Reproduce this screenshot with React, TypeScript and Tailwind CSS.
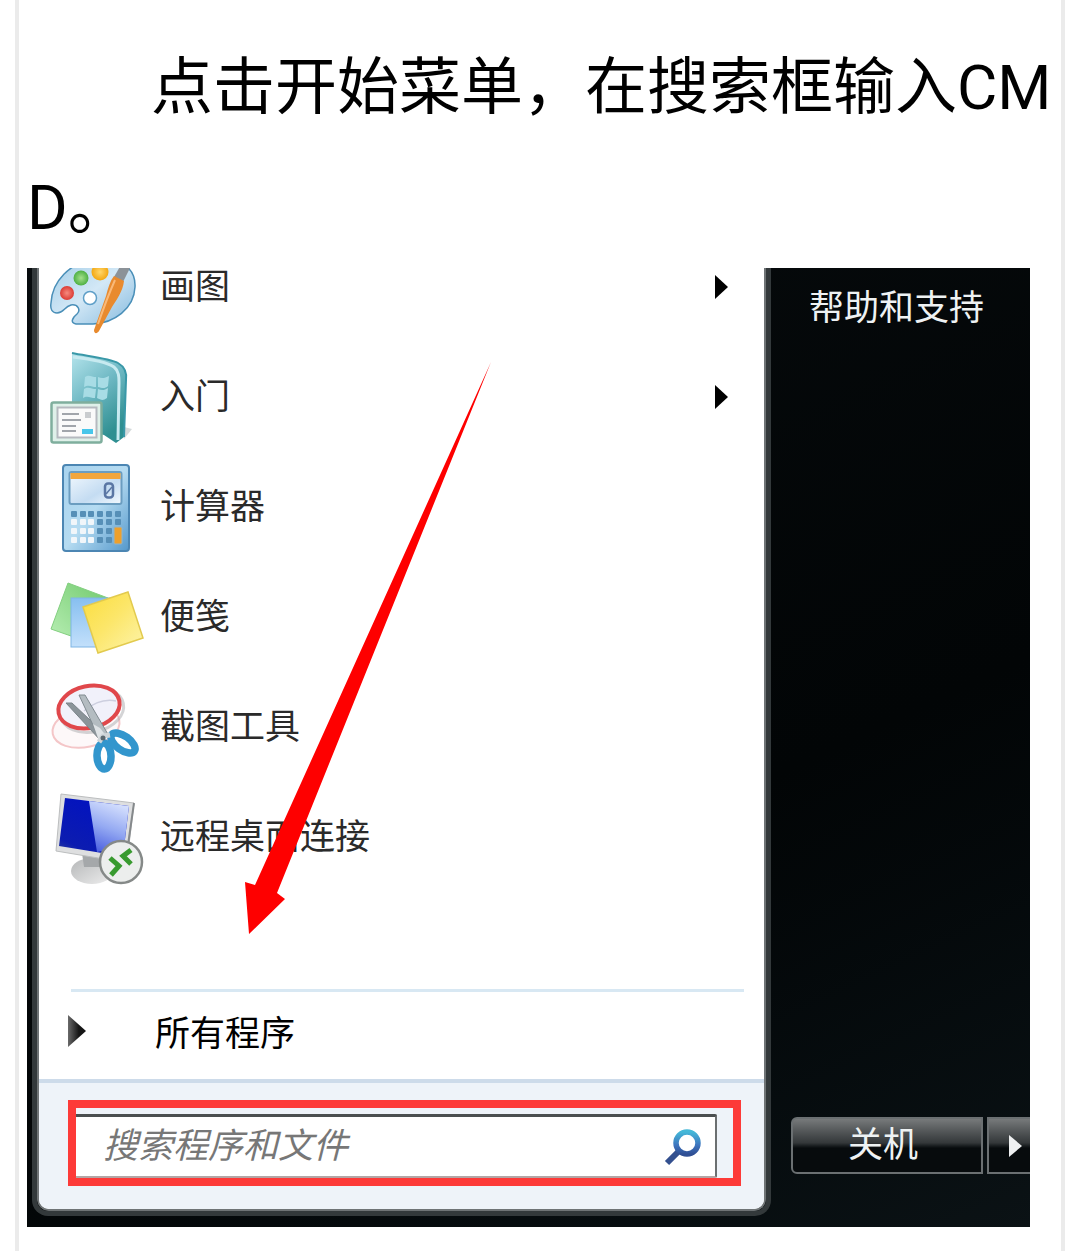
import type { FC, ReactNode } from "react";

interface IconProps {
  children: ReactNode;
}

const Icon: FC<IconProps> = ({ children }) => (
  <svg
    viewBox="0 0 96 96"
    className="w-24 h-24 shrink-0 overflow-visible"
    aria-hidden="true"
  >
    {children}
  </svg>
);

const PaintIcon = () => (
  <Icon>
    <defs>
      <linearGradient id="palette" x1="0" y1="0" x2="1" y2="1">
        <stop offset="0" stopColor="#9fcbe6" />
        <stop offset="0.5" stopColor="#d3e8f6" />
        <stop offset="1" stopColor="#85bade" />
      </linearGradient>
      <radialGradient id="redPaint">
        <stop offset="0" stopColor="#f58b7f" />
        <stop offset="1" stopColor="#dc3b34" />
      </radialGradient>
      <radialGradient id="greenPaint">
        <stop offset="0" stopColor="#a5e08b" />
        <stop offset="1" stopColor="#4eb043" />
      </radialGradient>
      <radialGradient id="yellowPaint">
        <stop offset="0" stopColor="#ffd76b" />
        <stop offset="1" stopColor="#f3a712" />
      </radialGradient>
    </defs>
    <path
      d="M3 64C4 42 22 24 46 20C70 17 88 28 87 48C86 70 66 84 45 85H28C22 84 24 79 29 75C33 71 30 65 23 66C16 68 16 74 9 74C4 74 2 70 3 64Z"
      fill="url(#palette)"
      stroke="#4a8fb8"
      strokeWidth="1.5"
    />
    <circle cx="42" cy="59" r="6.5" fill="#fff" stroke="#5f9fc8" strokeWidth="1.5" />
    <circle cx="19" cy="54" r="7" fill="url(#redPaint)" />
    <circle cx="33" cy="39" r="7.5" fill="url(#greenPaint)" />
    <circle cx="52" cy="33" r="8.5" fill="url(#yellowPaint)" />
    <path d="M66 38L74 24L83 27L75 43Z" fill="#8c9298" />
    <path d="M66 37L76 42C75 52 68 62 64 68L51 92C49 95 46 95 46 91L58 57C60 49 62 42 66 37Z" fill="#e88a2e" />
    <path d="M67 41C63 50 57 65 50 85" fill="none" stroke="#f9b978" strokeWidth="2" />
  </Icon>
);

const GettingStartedIcon = () => (
  <Icon>
    <defs>
      <linearGradient id="book" x1="0" y1="0" x2="0.5" y2="1">
        <stop offset="0" stopColor="#b5e4ec" />
        <stop offset="0.5" stopColor="#6fb9c4" />
        <stop offset="1" stopColor="#2f8f91" />
      </linearGradient>
    </defs>
    <path d="M76 78L84 80L76 90Z" fill="#d5dadb" />
    <path d="M24 4C38 7 61 9 70 14C77 18 79 23 78 31L76 88L68 94L56 86L24 78Z" fill="url(#book)" />
    <path d="M24 4C38 7 61 9 70 14C77 18 79 23 78 31L76 88" fill="none" stroke="#3998a8" strokeWidth="2" />
    <path d="M25 8C42 10 59 13 66 18C71 22 71 28 71 34L70 91" fill="none" stroke="#c7eaf0" strokeWidth="3" />
    <path d="M37 28C41 25 44 28 48 28V38C44 38 41 35 36 38ZM50 28C54 30 57 29 61 27L60 37C57 40 54 39 50 38ZM36 40C40 37 44 40 48 40L47 49C43 49 39 46 35 49ZM50 40C54 42 57 41 60 39L59 49C55 52 53 51 49 49Z" fill="#a8dce5" />
    <rect x="3.5" y="53.5" width="50" height="40" rx="2" fill="#dff0e9" stroke="#7fae9d" strokeWidth="2.5" />
    <rect x="9.5" y="58.5" width="39" height="30" fill="#fafafa" stroke="#b5b9bf" strokeWidth="2" />
    <path d="M14 65H31M14 71H33M14 77H28M14 82H28" stroke="#a1a5ab" strokeWidth="1.8" />
    <rect x="37" y="63" width="6" height="6" fill="#c9cccf" />
    <rect x="34" y="80" width="11" height="5" fill="#48c6ea" />
  </Icon>
);

const keyColumns = [26, 35, 43, 52, 61, 70];
const keyRows = [55, 63, 72, 81];

const CalculatorIcon = () => (
  <Icon>
    <defs>
      <linearGradient id="calcBody" x1="0" y1="0" x2="1" y2="1">
        <stop offset="0" stopColor="#a8d3ee" />
        <stop offset="0.5" stopColor="#b5dbf1" />
        <stop offset="1" stopColor="#5498cb" />
      </linearGradient>
      <linearGradient id="calcScreen" x1="0" y1="0" x2="1" y2="1">
        <stop offset="0" stopColor="#f3f9fe" />
        <stop offset="0.6" stopColor="#c4dcf2" />
        <stop offset="1" stopColor="#f3f9fe" />
      </linearGradient>
    </defs>
    <rect x="15" y="6" width="66" height="86" rx="3" fill="url(#calcBody)" stroke="#4c86b3" strokeWidth="2" />
    <rect x="21.5" y="13" width="52" height="32" rx="2" fill="url(#calcScreen)" stroke="#6b9dc0" strokeWidth="2" />
    <rect x="22.5" y="14" width="50" height="6" fill="#f2a63c" />
    <rect x="57" y="24.5" width="8" height="14" rx="3" fill="none" stroke="#5a76a4" strokeWidth="2.5" />
    <path d="M58 35L64 28" stroke="#5a76a4" strokeWidth="1.5" />
    {keyRows.map((y, row) =>
      keyColumns.map((x, column) => (
        <rect
          key={`${x}-${y}`}
          x={x - 3}
          y={y - 3}
          width="6"
          height="6"
          rx="1"
          fill={row > 0 && column < 3 ? "#f1f6fa" : "#568fb7"}
        />
      )),
    )}
    <rect x="66" y="68" width="8" height="17" rx="1" fill="#eda02c" stroke="#8fb4cb" strokeWidth="1" />
  </Icon>
);

const StickyNotesIcon = () => (
  <Icon>
    <defs>
      <linearGradient id="greenNote" x1="0" y1="1" x2="1" y2="0">
        <stop offset="0" stopColor="#b9efb5" />
        <stop offset="1" stopColor="#70c96c" />
      </linearGradient>
      <linearGradient id="blueNote" x1="0" y1="0" x2="0" y2="1">
        <stop offset="0" stopColor="#87bff0" />
        <stop offset="1" stopColor="#c3e0fb" />
      </linearGradient>
      <linearGradient id="yellowNote" x1="0.1" y1="0.2" x2="0.9" y2="1">
        <stop offset="0" stopColor="#fbe04b" />
        <stop offset="0.4" stopColor="#fce669" />
        <stop offset="1" stopColor="#fdf3a6" />
      </linearGradient>
    </defs>
    <path d="M20 14L60 29L43 74L3 60Z" fill="url(#greenNote)" stroke="#83cf80" />
    <rect x="23" y="29" width="40" height="49" fill="url(#blueNote)" stroke="#7fb5e4" />
    <path d="M35 38L80 23L95 69L50 84Z" fill="url(#yellowNote)" stroke="#e2ca4e" strokeWidth="1.5" />
  </Icon>
);

const SnippingIcon = () => (
  <Icon>
    <ellipse cx="38" cy="48" rx="34" ry="20" transform="rotate(-12 38 48)" fill="#fdf8f9" stroke="#f4c6c8" strokeWidth="2" />
    <ellipse cx="44" cy="31" rx="32" ry="22" transform="rotate(-12 44 31)" fill="none" stroke="#a9a9ae" strokeWidth="3" opacity="0.5" />
    <ellipse cx="41" cy="28" rx="31" ry="21" transform="rotate(-12 41 28)" fill="#f1f1fa" stroke="#e0474b" strokeWidth="4" />
    <path d="M36 32C48 22 58 20 68 22" fill="none" stroke="#cdcfdf" strokeWidth="1.5" />
    <path d="M18 24L24 24L59 57L53 62Z" fill="#8b949a" stroke="#7a8389" strokeWidth="1" />
    <path d="M31 16L37 16L61 57L52 61Z" fill="#b4bcc1" stroke="#808a90" strokeWidth="1" />
    <path d="M45 45L52 49L59 58L51 62Z" fill="#dfe3e6" />
    <ellipse cx="56" cy="77" rx="7" ry="13" transform="rotate(-2 56 77)" fill="#fff" stroke="#3296cd" strokeWidth="7.5" />
    <ellipse cx="75" cy="64" rx="14" ry="7" transform="rotate(36 75 64)" fill="#fff" stroke="#3296cd" strokeWidth="7.5" />
    <path d="M51 63L55 57L62 56" fill="none" stroke="#cfd5d9" strokeWidth="5" />
    <circle cx="55" cy="59" r="2.5" fill="#5c6870" />
  </Icon>
);

const RemoteDesktopIcon = () => (
  <Icon>
    <defs>
      <linearGradient id="screenDark" x1="0" y1="1" x2="0.5" y2="0.2">
        <stop offset="0" stopColor="#2c3f9c" />
        <stop offset="0.25" stopColor="#0c1cb0" />
        <stop offset="1" stopColor="#0414bd" />
      </linearGradient>
      <linearGradient id="screenLight" x1="0.2" y1="1" x2="0.5" y2="0">
        <stop offset="0" stopColor="#4a5fe0" />
        <stop offset="0.5" stopColor="#94a9f2" />
        <stop offset="1" stopColor="#d3defd" />
      </linearGradient>
      <linearGradient id="stand" x1="0" y1="0" x2="1" y2="1">
        <stop offset="0" stopColor="#b5b7b8" />
        <stop offset="1" stopColor="#eeeeee" />
      </linearGradient>
    </defs>
    <ellipse cx="44" cy="82" rx="21" ry="13" fill="url(#stand)" />
    <path d="M34 64L52 67V78H36Z" fill="#a5a8aa" />
    <path d="M13 5L86 14L80 64L56 70L8 62Z" fill="#dedfe0" stroke="#bcbebf" strokeWidth="1" />
    <path d="M17 9L81 17L76 58L54 64L11 57Z" fill="url(#screenDark)" />
    <path d="M41 12L81 17L76 58L49 63Z" fill="url(#screenLight)" />
    <path d="M86 14L80 56" stroke="#85898b" strokeWidth="2" />
    <circle cx="73" cy="73" r="21" fill="#eceeed" stroke="#858988" strokeWidth="2.5" />
    <path d="M62 69L71 77L63 86" fill="none" stroke="#389a2f" strokeWidth="5" />
    <path d="M83 61L75 67L83 75" fill="none" stroke="#389a2f" strokeWidth="5" />
  </Icon>
);

interface MenuItemProps {
  label: string;
  icon: ReactNode;
  hasSubmenu?: boolean;
}

const MenuItem: FC<MenuItemProps> = ({ label, icon, hasSubmenu }) => (
  <li>
    <button
      type="button"
      className="flex items-center gap-4 w-full h-[110px] pl-[9px] pr-9 text-left text-[#2a2a2a]"
    >
      {icon}
      <span className="flex-1">{label}</span>
      {hasSubmenu && (
        <svg viewBox="0 0 13 24" className="w-[13px] h-6" aria-hidden="true">
          <path d="M0 0L13 12L0 24Z" fill="#000" />
        </svg>
      )}
    </button>
  </li>
);

const menuItems: MenuItemProps[] = [
  { label: "画图", icon: <PaintIcon />, hasSubmenu: true },
  { label: "入门", icon: <GettingStartedIcon />, hasSubmenu: true },
  { label: "计算器", icon: <CalculatorIcon /> },
  { label: "便笺", icon: <StickyNotesIcon /> },
  { label: "截图工具", icon: <SnippingIcon /> },
  { label: "远程桌面连接", icon: <RemoteDesktopIcon /> },
];

const SearchBox = () => (
  <div className="bg-[#eef3f9] border-t-4 border-[#cddbea] pt-[17px] pb-[23px] pl-[29px] pr-[23px]">
    <div className="border-8 border-[#fd3a38] pt-[6px] pr-4">
      <label className="flex items-center h-16 bg-white border-t-[3px] border-r-2 border-b-2 border-t-[#4b4f50] border-r-[#6b6f71] border-b-[#b3a5a5] rounded-r-xs pl-[27px] pr-[14px]">
        <input
          type="text"
          placeholder="搜索程序和文件"
          aria-label="搜索程序和文件"
          className="flex-1 min-w-0 italic outline-none placeholder:text-[#777777]"
        />
        <svg viewBox="0 0 38 38" className="w-[38px] h-[38px]" aria-hidden="true">
          <defs>
            <linearGradient id="lens" x1="0" y1="0" x2="0" y2="1">
              <stop offset="0" stopColor="#45b8d8" />
              <stop offset="0.6" stopColor="#3d74be" />
              <stop offset="1" stopColor="#2f4f94" />
            </linearGradient>
          </defs>
          <path d="M17 22L4 35" stroke="#33508f" strokeWidth="6" />
          <circle cx="24" cy="15" r="11" fill="#fff" stroke="url(#lens)" strokeWidth="5.5" />
        </svg>
      </label>
    </div>
  </div>
);

const StartMenu = () => (
  <div className="ml-[5px] mb-[11px] border-x-[5px] border-b-[5px] border-[#33393b] rounded-b-2xl overflow-hidden">
    <div className="border-x-2 border-b-2 border-[#6f7476] rounded-b-xl overflow-hidden bg-white">
      <ul className="-mt-9">
        {menuItems.map((item) => (
          <MenuItem key={item.label} {...item} />
        ))}
      </ul>
      <hr className="mt-[97px] ml-8 mr-5 border-t-[3px] border-[#d8e8f3]" />
      <button
        type="button"
        className="flex items-center gap-[69px] w-full h-[87px] pb-[2px] pl-[29px] text-left text-black"
      >
        <svg viewBox="0 0 18 40" className="w-[18px] h-10" aria-hidden="true">
          <defs>
            <linearGradient id="allArrow">
              <stop offset="0" stopColor="#6a6a6a" />
              <stop offset="0.6" stopColor="#151515" />
            </linearGradient>
          </defs>
          <path d="M0 0L18 16L0 32Z" fill="url(#allArrow)" />
        </svg>
        <span>所有程序</span>
      </button>
      <SearchBox />
    </div>
  </div>
);

const SidePanel = () => (
  <div className="flex flex-col justify-between text-[#eef2f3]">
    <a href="#help" className="flex items-center h-20 pl-[38px] whitespace-nowrap">
      帮助和支持
    </a>
    <div className="flex gap-1 pl-5 mb-[53px]">
      <button
        type="button"
        className="w-[192px] h-[57px] pr-2 border-2 border-[#6b7072] rounded-l-md bg-linear-to-b from-[#777a7b] from-0% via-[#34383a] via-45% to-[#070b0d] to-55%"
      >
        关机
      </button>
      <button
        type="button"
        aria-label="关机选项"
        className="flex-1 h-[57px] pl-5 border-2 border-r-0 border-[#6b7072] bg-linear-to-b from-[#777a7b] from-0% via-[#34383a] via-45% to-[#070b0d] to-55%"
      >
        <svg viewBox="0 0 13 22" className="w-[13px] h-[22px]" aria-hidden="true">
          <path d="M0 0L13 11L0 22Z" fill="#eef0f1" />
        </svg>
      </button>
    </div>
  </div>
);

const App = () => {
  return (
    <div className="min-h-screen bg-white font-[Roboto,'Noto_Sans_CJK_SC',sans-serif]">
      <article
        lang="zh-CN"
        className="min-h-screen mx-[15px] px-2 pt-7 pb-6 border-x-4 border-[#ebebeb] text-black"
      >
        <p className="indent-[2em] text-[62px] leading-[120px] break-all">
          点击开始菜单，在搜索框输入CMD。
        </p>
        <figure className="relative grid grid-cols-[744fr_259fr] mr-[23px] overflow-hidden bg-linear-155 from-[#080c0e] via-[#020506] via-60% to-[#0b1215] text-[35px] leading-none">
          <StartMenu />
          <SidePanel />
          <svg
            viewBox="0 0 246 572"
            className="absolute left-[218px] top-[94px] w-[246px] h-[572px] pointer-events-none"
            aria-hidden="true"
          >
            <path d="M246 0L10 523L0 520L4 572L40 537L32 531Z" fill="#fe0000" />
          </svg>
        </figure>
      </article>
    </div>
  );
};

export default App;
